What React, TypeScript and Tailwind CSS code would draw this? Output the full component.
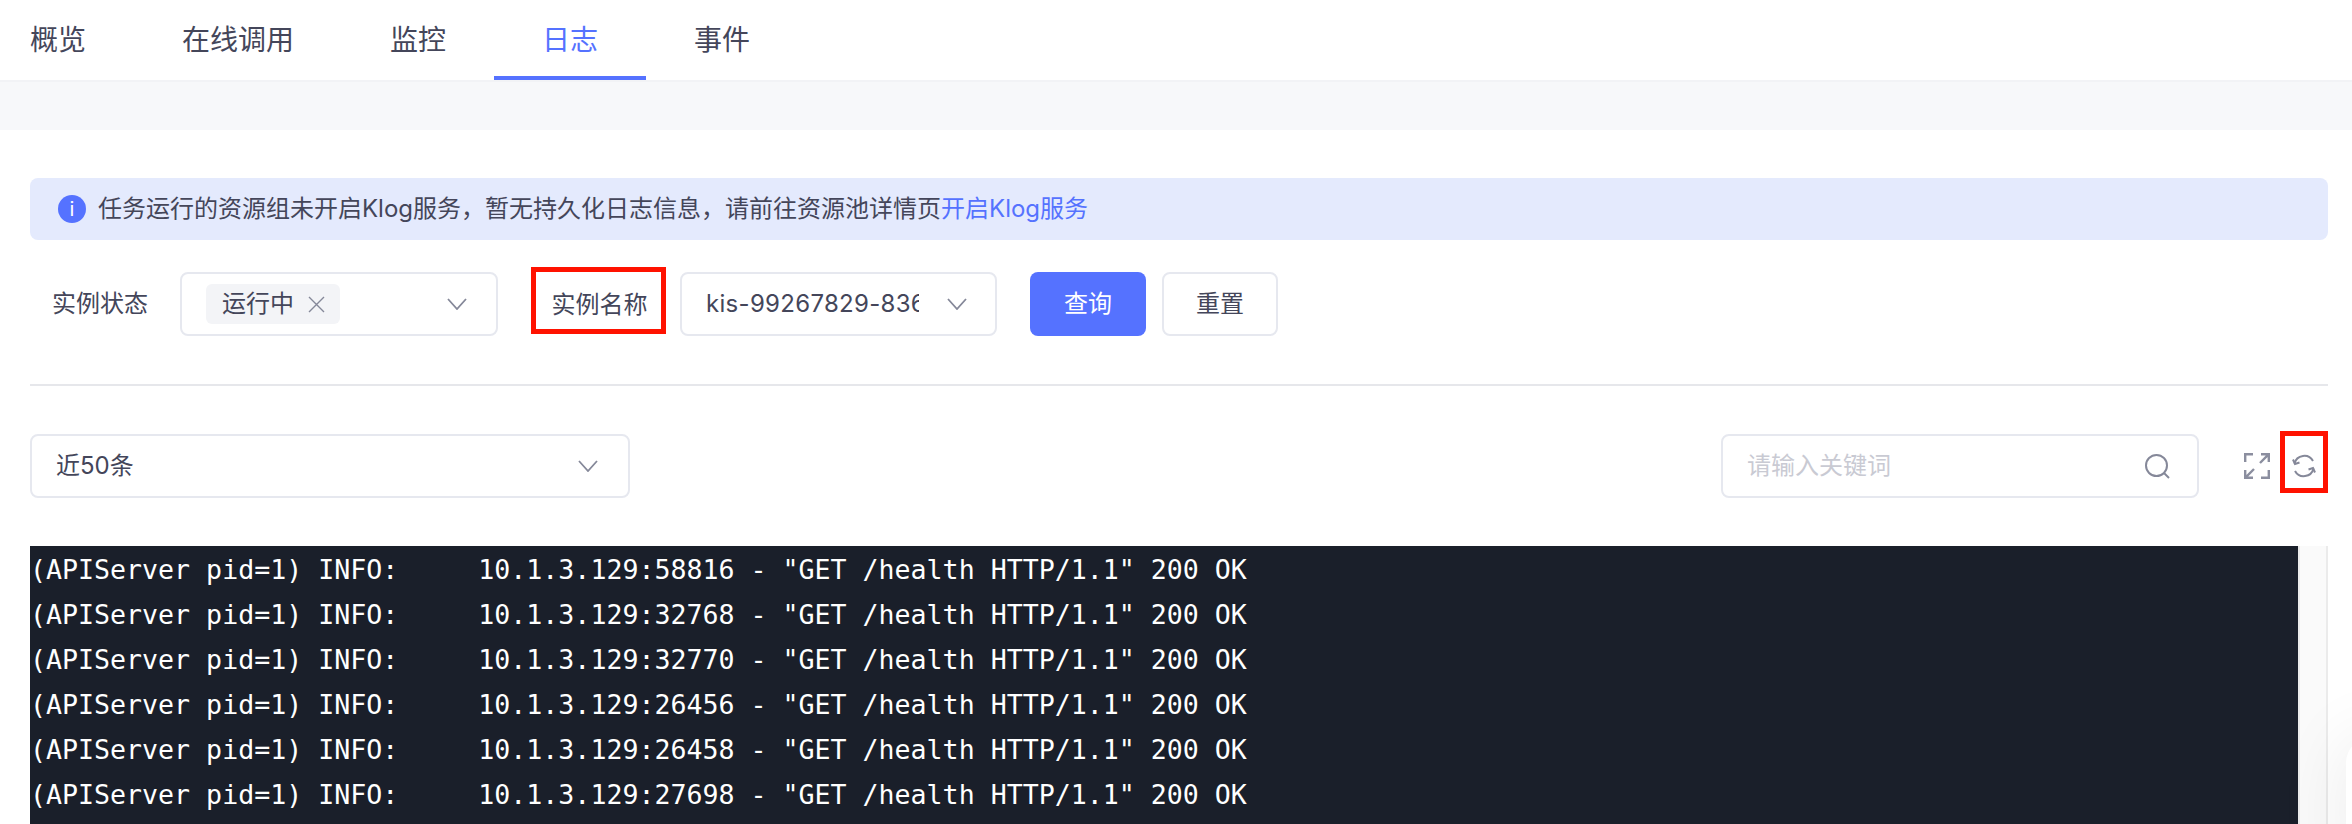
import React from "react";

const font = "font-['Inter','Noto_Sans_CJK_SC',sans-serif]";

const ports = ["58816", "32768", "32770", "26456", "26458", "27698"];

function Chevron() {
  return (
    <svg width="20" height="12" viewBox="0 0 20 12" fill="none" stroke="#858899" strokeWidth="1.800" className="shrink-0">
      <path d="M1 1l9 10 9-10" />
    </svg>
  );
}

function Cross() {
  return (
    <svg width="17" height="17" viewBox="0 0 17 17" fill="none" stroke="#858899" strokeWidth="1.400" className="shrink-0 ml-[14px]">
      <path d="M1 1l15 15M16 1L1 16" />
    </svg>
  );
}

function SearchIcon() {
  return (
    <svg width="25" height="25" viewBox="0 0 25 25" fill="none" stroke="#858899" strokeWidth="2" className="shrink-0">
      <circle cx="11.500" cy="11.500" r="10.500" />
      <path d="M19 19l5 5" />
    </svg>
  );
}

function Expand() {
  return (
    <svg width="26" height="26" viewBox="0 0 26 26" fill="none" stroke="#8b8e9f" strokeWidth="2.400" className="shrink-0 block">
      <path d="M9 1.200H1.200V9" />
      <path d="M17 1.200h7.800V9M24.800 1.200L16 10" />
      <path d="M1.200 17v7.800H9M1.200 24.800L10 16" />
      <path d="M17 24.800h7.800V17" />
    </svg>
  );
}

function Refresh() {
  return (
    <svg width="24" height="24" viewBox="0 0 24 24" fill="none" stroke="#858899" strokeWidth="2" className="block">
      <path d="M2.500 9.500A10 10 0 0 1 21 7" />
      <path d="M21.500 14.500A10 10 0 0 1 3 17" />
      <path d="M1 5.500l2 4.500 4.500-1.500M23 18.500l-2-4.500-4.500 1.500" />
    </svg>
  );
}

export default function App() {
  return (
    <div className={`relative w-[2352px] h-[824px] overflow-hidden bg-white text-[#44465a] ${font}`}>
      <div className="flex h-[82px] border-b-2 border-[#f2f3f6] text-[28px] leading-[40px]">
        <div className="pl-[30px] pr-[50px] pt-[20px]">概览</div>
        <div className="px-[49px] pt-[20px] ml-[-3px]">在线调用</div>
        <div className="px-[49px] pt-[20px] ml-[-2px]">监控</div>
        <div className="w-[152px] h-[80px] ml-[-1px] border-b-4 border-[#5572ff] text-center pt-[20px] text-[#5572ff]">日志</div>
        <div className="px-[48px] pt-[20px]">事件</div>
      </div>
      <div className="h-[48px] bg-[#f7f8fa]" />
      <div className="pr-[24px] pt-[48px] pl-[30px]">
        <div className="h-[62px] w-[2298px] rounded-[8px] bg-[#e4eafd] flex items-center pl-[28px] text-[24px]">
          <span className="w-[28px] h-[28px] rounded-full bg-[#5572ff] text-white text-[20px] flex items-center justify-center mr-[12px]">i</span>
          <span>任务运行的资源组未开启Klog服务，暂无持久化日志信息，请前往资源池详情页</span>
          <span className="text-[#5572ff]">开启Klog服务</span>
        </div>
        <div className="flex items-center h-[64px] mt-[32px] text-[24px]">
          <span className="pl-[22px] w-[150px]">实例状态</span>
          <div className="w-[318px] h-[64px] border-2 border-[#e6e8ef] rounded-[8px] flex items-center pl-[24px] pr-[29px]">
            <span className="h-[40px] w-[134px] bg-[#f3f4f7] rounded-[6px] flex items-center pl-[16px]">
              运行中
              <Cross />
            </span>
            <span className="flex-1" />
            <Chevron />
          </div>
          <div className="w-[135px] h-[67px] ml-[33px] mt-[-7px] pt-[9px] pl-[2px] border-[5px] border-[#ff1200] flex items-center justify-center">实例名称</div>
          <div className="w-[317px] h-[64px] ml-[14px] border-2 border-[#e6e8ef] rounded-[8px] flex items-center pl-[24px] pr-[28px]">
            <span className="w-[213px] overflow-hidden whitespace-nowrap tracking-[0.3px]">kis-99267829-8368</span>
            <span className="flex-1" />
            <Chevron />
          </div>
          <div className="w-[116px] h-[64px] ml-[33px] rounded-[8px] bg-[#5572ff] text-white flex items-center justify-center">查询</div>
          <div className="w-[116px] h-[64px] ml-[16px] rounded-[8px] border-2 border-[#e6e8ef] flex items-center justify-center">重置</div>
        </div>
        <div className="w-[2298px] h-[2px] bg-[#e6e7eb] mt-[48px]" />
        <div className="flex items-center w-[2298px] h-[64px] mt-[48px] text-[24px]">
          <div className="w-[600px] h-[64px] border-2 border-[#e6e8ef] rounded-[8px] flex items-center justify-between pl-[24px] pr-[30px]">
            <span>近50条</span>
            <Chevron />
          </div>
          <span className="flex-1" />
          <div className="w-[478px] h-[64px] border-2 border-[#e6e8ef] rounded-[8px] flex items-center justify-between pl-[24px] pr-[27px]">
            <span className="text-[#c9cad3]">请输入关键词</span>
            <SearchIcon />
          </div>
          <span className="ml-[45px] mr-[10px]"><Expand /></span>
          <div className="w-[48px] h-[62px] mt-[-8px] pt-[7px] border-[5px] border-[#ff1200] flex items-center justify-center"><Refresh /></div>
        </div>
        <div className="flex w-[2298px] h-[278px] mt-[48px]">
          <div className="flex-1 bg-[#1a1f2a] text-white font-['DejaVu_Sans_Mono',monospace] text-[26.6px] leading-[45px] whitespace-pre pt-[1px]">
            {ports.map((p) => (
              <div key={p}>{`(APIServer pid=1) INFO:     10.1.3.129:${p} - "GET /health HTTP/1.1" 200 OK`}</div>
            ))}
          </div>
          <div className="w-[30px] bg-[#fafafa] border-x-2 border-[#ebebeb]" />
        </div>
      </div>
      <div className="absolute left-[2346px] top-[737px] w-[60px] h-[140px] rounded-tl-[26px] bg-white shadow-[0_0_70px_rgba(0,0,0,0.09)]" />
    </div>
  );
}
